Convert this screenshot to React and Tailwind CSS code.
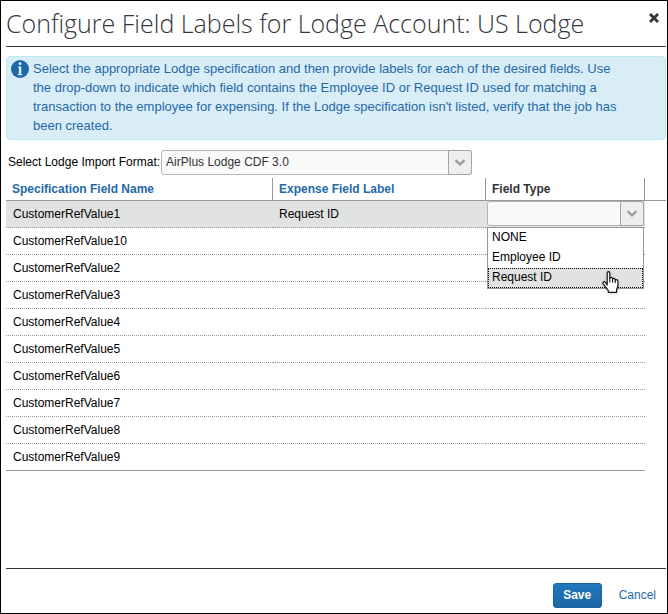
import React from "react";

const fields = [
  "CustomerRefValue1",
  "CustomerRefValue10",
  "CustomerRefValue2",
  "CustomerRefValue3",
  "CustomerRefValue4",
  "CustomerRefValue5",
  "CustomerRefValue6",
  "CustomerRefValue7",
  "CustomerRefValue8",
  "CustomerRefValue9",
];

const fieldTypes = ["NONE", "Employee ID", "Request ID"];

function Chevron() {
  return (
    <svg viewBox="0 0 12 8" className="h-2 w-3" fill="none" stroke="#999da3" strokeWidth="2.4" aria-hidden="true">
      <path d="M1.5 1.2 L6 5.4 L10.5 1.2" />
    </svg>
  );
}

function SelectBox({ id, label, className, children }) {
  return (
    <div className={"relative h-[25px] " + className}>
      <select
        id={id}
        aria-label={label}
        className="block h-full w-full appearance-none rounded-[3px] border border-[#b4b6b9] bg-[#f9f9f9] pr-7 pb-px pl-1 text-xs text-[#333] outline-none"
      >
        {children}
      </select>
      <span className="pointer-events-none absolute inset-y-0 right-0 flex w-6 items-center justify-center rounded-r-[3px] border border-[#a2a4a8] bg-[#eeeeee]">
        <Chevron />
      </span>
    </div>
  );
}

function InfoIcon() {
  return (
    <svg viewBox="0 0 18 18" className="mt-px h-[18px] w-[18px] shrink-0" aria-hidden="true">
      <circle cx="9" cy="9" r="9" fill="#1a69ab" />
      <circle cx="9" cy="3.6" r="1.5" fill="#d9edf7" />
      <path d="M7 6.4 H10.3 V14 H11.3 V15.2 H6.8 V14 H7.8 V7.6 H7 Z" fill="#d9edf7" />
    </svg>
  );
}

function HandPointer() {
  return (
    <svg viewBox="0 0 17 22" className="absolute top-[43px] left-[114px] h-[22px] w-[17px] drop-shadow-sm" aria-hidden="true">
      <path
        d="M5.2 14 V2.2 C5.2 .2 7.8 .2 7.8 2.2 V7.2 C8.3 6 10.4 6.3 10.5 7.8 C11.2 6.9 13 7.3 13.2 8.8 C14.2 8.2 15.9 8.8 15.9 10.4 V14.5 C15.9 16.3 14.6 17.4 14.6 19 V21.3 H6.3 V19.5 C5 17.5 2.6 14.8 1.2 12.8 C.2 11.2 2 9.9 3.3 11.1 Z"
        fill="#fff"
        stroke="#111"
        strokeWidth="1.2"
        strokeLinejoin="round"
      />
      <path d="M7.8 7 V11.5 M10.5 7.8 V11.5 M13.2 8.8 V12" fill="none" stroke="#111" strokeWidth="1.1" />
    </svg>
  );
}

function FieldTypeMenu() {
  return (
    <div className="absolute top-[26px] left-0 z-10 w-full border border-[#96989d] bg-white">
      <ul role="listbox" aria-label="Field Type options">
        {fieldTypes.map((type) => (
          <li
            key={type}
            role="option"
            aria-selected={type === "Request ID"}
            className="h-5 border border-transparent pl-[3px] leading-4 aria-selected:border-dotted aria-selected:border-black aria-selected:bg-[#e1e3e2]"
          >
            {type}
          </li>
        ))}
      </ul>
      <HandPointer />
    </div>
  );
}

export default function App() {
  return (
    <main className="flex min-h-screen flex-col border border-black bg-white pl-[5px] pr-px font-['Liberation_Sans',Arial,sans-serif] text-xs text-black">
      <header className="flex h-[46px] items-start justify-between border-b border-[#333740]">
        <h1 className="pt-1 font-['Open_Sans',sans-serif] text-[25px] leading-9 font-light whitespace-nowrap text-[#333740]">
          Configure Field Labels for Lodge Account: US Lodge
        </h1>
        <button type="button" aria-label="Close" className="mt-3 mr-[7px]">
          <svg viewBox="0 0 10 10" className="h-[10px] w-[10px]" stroke="#333" strokeWidth="2.8" aria-hidden="true">
            <path d="M1 1 L9 9 M9 1 L1 9" />
          </svg>
        </button>
      </header>

      <section className="mt-[9px] flex gap-1 rounded border border-[#bce8f1] bg-[#d9edf7] pt-0.5 pr-4 pb-1 pl-1 text-[#1f69a8]">
        <InfoIcon />
        <p className="max-w-[598px] text-[13px] leading-[19px]">
          Select the appropriate Lodge specification and then provide labels for each of the desired fields. Use the
          drop-down to indicate which field contains the Employee ID or Request ID used for matching a transaction to
          the employee for expensing. If the Lodge specification isn't listed, verify that the job has been created.
        </p>
      </section>

      <div className="mt-[10px] flex items-center gap-px pl-0.5">
        <label htmlFor="import-format" className="pb-0.5 whitespace-nowrap">
          Select Lodge Import Format:
        </label>
        <SelectBox id="import-format" className="w-[311px]">
          <option>AirPlus Lodge CDF 3.0</option>
        </SelectBox>
      </div>

      <div className="mt-[3px] bg-[linear-gradient(#96989d,#96989d)] bg-[length:100%_1px] bg-[position:0_22px] bg-no-repeat pr-[21px]">
        <table className="w-full table-fixed border-separate border-spacing-0 text-left">
          <colgroup>
            <col className="w-[267px]" />
            <col />
            <col className="w-[159px]" />
          </colgroup>
          <thead>
            <tr className="h-[23px] text-[#1f69a8] [&>th]:border-r [&>th]:border-[#96989d] [&>th]:pb-px">
              <th className="pl-1.5">Specification Field Name</th>
              <th className="pl-1.5">Expense Field Label</th>
              <th className="pl-1.5 text-[#333]">Field Type</th>
            </tr>
          </thead>
          <tbody>
            {fields.map((name, index) => (
              <tr
                key={name}
                className="h-[27px] first:bg-[#e1e3e2] [&>td]:border-b [&>td]:border-dotted [&>td]:border-[#96989d] last:[&>td]:border-solid"
              >
                <td className="pl-[7px]">{name}</td>
                <td className="pl-1.5">{index === 0 ? "Request ID" : ""}</td>
                <td className="pl-px align-top">
                  {index === 0 && (
                    <div className="relative mr-px">
                      <SelectBox id="field-type" label="Field Type" className="w-full">
                        <option></option>
                        {fieldTypes.map((type) => (
                          <option key={type}>{type}</option>
                        ))}
                      </SelectBox>
                      <FieldTypeMenu />
                    </div>
                  )}
                </td>
              </tr>
            ))}
          </tbody>
        </table>
      </div>

      <footer className="mt-auto flex h-[45px] items-start justify-end border-t border-[#333740] pt-3.5 pr-2.5">
        <button
          type="button"
          className="h-[25px] w-[49px] rounded-[3px] border border-[#1a62a0] bg-linear-to-b from-[#2277bd] to-[#1b66a5] pb-0.5 font-bold text-white"
        >
          Save
        </button>
        <button type="button" className="ml-[17px] h-[25px] pb-0.5 text-[#1f69a8]">
          Cancel
        </button>
      </footer>
    </main>
  );
}
